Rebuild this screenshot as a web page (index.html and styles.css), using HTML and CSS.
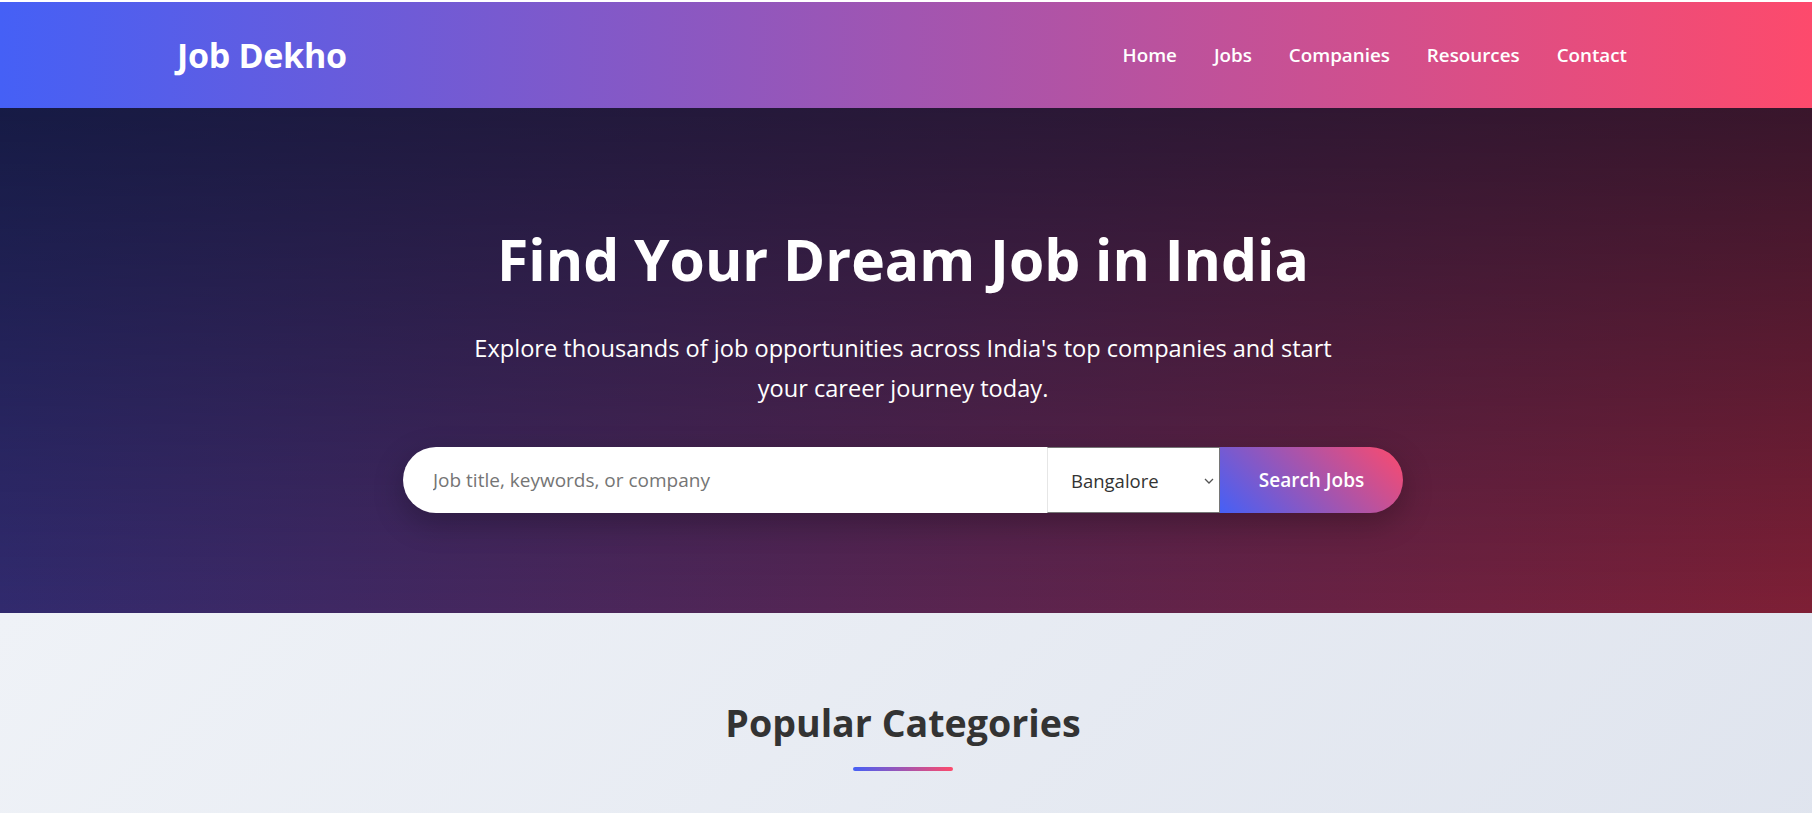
FILE: index.html
```html
<!DOCTYPE html>
<html lang="en">
<head>
<meta charset="utf-8">
<title>Job Dekho - Find Your Dream Job in India</title>
<link rel="stylesheet" href="styles.css">
</head>
<body>
<header class="site-header">
  <div class="header-inner">
    <a class="logo" href="#">Job Dekho</a>
    <nav class="main-nav">
      <a href="#">Home</a>
      <a href="#">Jobs</a>
      <a href="#">Companies</a>
      <a href="#">Resources</a>
      <a href="#">Contact</a>
    </nav>
  </div>
</header>

<section class="hero">
  <h1 class="hero-title">Find Your Dream Job in India</h1>
  <p class="hero-text">Explore thousands of job opportunities across India's top companies and start your career journey today.</p>
  <form class="search-bar">
    <input class="search-input" type="text" placeholder="Job title, keywords, or company" autofocus>
    <div class="select-wrap">
      <select class="search-select">
        <option>Bangalore</option>
        <option>Mumbai</option>
        <option>Delhi</option>
        <option>Hyderabad</option>
        <option>Chennai</option>
        <option>Pune</option>
      </select>
      <svg class="select-arrow" width="10" height="6" viewBox="0 0 10 6"><path d="M1 1l4 4 4-4" fill="none" stroke="#555" stroke-width="1.3"/></svg>
    </div>
    <button class="search-btn" type="button">Search Jobs</button>
  </form>
</section>

<section class="categories">
  <h2 class="section-title">Popular Categories</h2>
  <div class="title-bar"></div>
</section>
</body>
</html>
```

FILE: styles.css
```css
* {
  box-sizing: border-box;
}

body {
  margin: 0;
  padding-top: 2px;
  background: #ffffff;
  font-family: "Open Sans", "Noto Sans", sans-serif;
  color: #333333;
}

.site-header {
  height: 106px;
  background: linear-gradient(to right, #4560f6, #fd4a6c);
}

.header-inner {
  height: 100%;
  display: flex;
  align-items: center;
  justify-content: space-between;
  padding: 0 185px 0 177px;
}

.logo {
  color: #ffffff;
  text-decoration: none;
  font-size: 34px;
  font-weight: 700;
  letter-spacing: -0.3px;
}

.main-nav {
  display: flex;
  gap: 37px;
}

.main-nav a {
  color: #ffffff;
  text-decoration: none;
  font-size: 18.8px;
  font-weight: 600;
}

.hero {
  padding: 117px 6px 100px 0;
  text-align: center;
  color: #ffffff;
  background:
    linear-gradient(to bottom, rgba(0, 14, 35, 0.55), rgba(0, 14, 35, 0)),
    linear-gradient(to right, #312a6e, #7e1f35);
}

.hero-title {
  margin: 0;
  font-size: 57px;
  line-height: 1.2;
  font-weight: 700;
}

.hero-text {
  max-width: 880px;
  margin: 35px auto 0;
  font-size: 23.6px;
  line-height: 40px;
}

.search-bar {
  display: flex;
  width: 1000px;
  height: 66px;
  margin: 39px auto 0;
  border-radius: 33px;
  overflow: hidden;
  box-shadow: 0 10px 30px rgba(0, 0, 0, 0.25);
}

.search-input {
  width: 644px;
  border: none;
  outline: none;
  padding: 0 20px 0 30px;
  font-family: inherit;
  font-size: 19px;
  color: #333333;
  background: #ffffff;
}

.search-input::placeholder {
  color: #757575;
}

.select-wrap {
  position: relative;
  width: 173px;
}

.search-select {
  width: 100%;
  height: 100%;
  appearance: none;
  -webkit-appearance: none;
  border: 1px solid #767676;
  border-left-color: #e6e6e6;
  border-radius: 0;
  padding: 0 20px 0 23px;
  font-family: inherit;
  font-size: 18.5px;
  color: #333333;
  background: #ffffff;
}

.select-arrow {
  position: absolute;
  right: 6px;
  top: 31px;
  pointer-events: none;
}

.search-btn {
  width: 183px;
  border: none;
  color: #ffffff;
  font-family: inherit;
  font-size: 19px;
  font-weight: 600;
  background: linear-gradient(45deg, #4560f6, #fd4a6c);
  cursor: pointer;
}

.categories {
  padding: 87px 6px 120px 0;
  text-align: center;
  background: linear-gradient(135deg, #eff2f7, #dfe4ee);
}

.section-title {
  margin: 0;
  font-size: 37.6px;
  line-height: 1.2;
  font-weight: 700;
  color: #333333;
}

.title-bar {
  width: 100px;
  height: 4px;
  margin: 21px auto 0;
  border-radius: 2px;
  background: linear-gradient(to right, #4560f6, #fd4a6c);
}
```
